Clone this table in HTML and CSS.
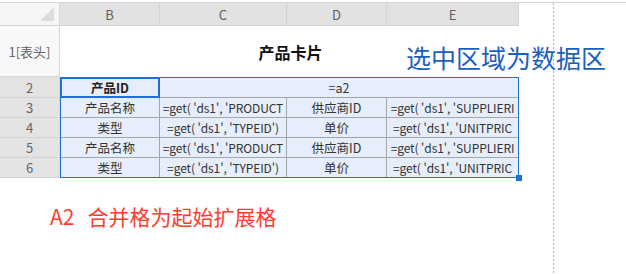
FILE: index.html
```html
<!DOCTYPE html>
<html lang="zh-CN">
<head>
<meta charset="utf-8">
<title>产品卡片</title>
<link rel="stylesheet" href="styles.css">
</head>
<body>
<div class="topline"></div>
<div class="page">
  <div class="canvas">
    <div class="sheet">
      <div class="corner"><span class="tri"></span></div>
      <div class="colh">B</div>
      <div class="colh">C</div>
      <div class="colh">D</div>
      <div class="colh">E</div>

      <div class="rowh r1">1[表头]</div>
      <div class="title">产品卡片</div>

      <div class="rowhs">
        <div class="rowh sel first">2</div>
        <div class="rowh sel">3</div>
        <div class="rowh sel">4</div>
        <div class="rowh sel">5</div>
        <div class="rowh sel last">6</div>
      </div>

      <div class="data">
        <div class="cell active bold">产品ID</div>
        <div class="cell merged">=a2</div>

        <div class="cell">产品名称</div>
        <div class="cell f">=get( 'ds1', 'PRODUCTNAME')</div>
        <div class="cell">供应商ID</div>
        <div class="cell f e">=get( 'ds1', 'SUPPLIERID')</div>

        <div class="cell">类型</div>
        <div class="cell f">=get( 'ds1', 'TYPEID')</div>
        <div class="cell">单价</div>
        <div class="cell f e">=get( 'ds1', 'UNITPRICE')</div>

        <div class="cell">产品名称</div>
        <div class="cell f">=get( 'ds1', 'PRODUCTNAME')</div>
        <div class="cell">供应商ID</div>
        <div class="cell f e">=get( 'ds1', 'SUPPLIERID')</div>

        <div class="cell nb">类型</div>
        <div class="cell f nb">=get( 'ds1', 'TYPEID')</div>
        <div class="cell nb">单价</div>
        <div class="cell f e nb">=get( 'ds1', 'UNITPRICE')</div>

        <span class="handle"></span>
      </div>
    </div>

    <div class="note-red"><span class="a2">A2</span>合并格为起始扩展格</div>
    <div class="note-blue">选中区域为数据区</div>
  </div>
  <div class="pagebreak"></div>
</div>
</body>
</html>
```

FILE: styles.css
```css
* { box-sizing: border-box; }

html, body {
  margin: 0;
  padding: 0;
  background: #ffffff;
}

body {
  width: 626px;
  height: 274px;
  overflow: hidden;
  font-family: "Noto Sans CJK SC", "Noto Sans", sans-serif;
  font-size: 13px;
  color: #333333;
}

.topline {
  height: 3px;
  border-bottom: 1px solid #d6d6d6;
}

.page {
  display: flex;
  height: 271px;
}

.canvas {
  position: relative;
  width: 553px;
}

.pagebreak {
  width: 1px;
  background: repeating-linear-gradient(to bottom, #b4b4b4 0 2px, transparent 2px 4px);
}

.sheet {
  display: grid;
  grid-template-columns: 60px 100px 127px 100px 132px;
  grid-template-rows: 23px 51px 101px;
  width: 519px;
}

.corner {
  position: relative;
  background: #f6f6f6;
  border-right: 1px solid #d6d6d6;
  border-bottom: 1px solid #d6d6d6;
}

.tri {
  position: absolute;
  right: 5px;
  bottom: 4px;
  width: 0;
  height: 0;
  border-left: 14px solid transparent;
  border-bottom: 14px solid #dcdcdc;
}

.colh {
  background: #e1e2e1;
  border-right: 1px solid #d2d3d2;
  border-bottom: 1px solid #d2d3d2;
  color: #606060;
  display: flex;
  align-items: center;
  justify-content: center;
  font-size: 13px;
}

.rowh {
  display: flex;
  align-items: center;
  justify-content: center;
  color: #666666;
  font-size: 13px;
  border-right: 1px solid #d6d6d6;
  border-bottom: 1px solid #d6d6d6;
}

.rowh.r1 {
  background: #f8f8f8;
}

.rowhs {
  display: flex;
  flex-direction: column;
}

.rowh.sel {
  background: #e2e3e2;
  height: 20px;
  border-bottom-color: #d2d3d2;
}

.rowh.sel.first { height: 21px; }

.title {
  grid-column: 2 / 6;
  display: flex;
  align-items: center;
  justify-content: center;
  font-size: 16px;
  font-weight: 700;
  color: #111111;
  padding-left: 2px;
}

.data {
  position: relative;
  grid-column: 2 / 6;
  display: grid;
  grid-template-columns: 99px 127px 100px 131px;
  grid-template-rows: 20px 20px 20px 20px 19px;
  background: #e6eefb;
  border: 1px solid #1f6fd8;
}

.cell {
  border-right: 1px solid #a3a6ab;
  border-bottom: 1px solid #a3a6ab;
  text-align: center;
  font-size: 12.5px;
  line-height: 17px;
  padding-top: 1px;
  overflow: hidden;
  white-space: normal;
  word-break: break-all;
  color: #333333;
}

.cell.e { border-right: none; }
.cell.nb { border-bottom: none; }

.cell.f {
  font-size: 12px;
  letter-spacing: -0.1px;
  padding-left: 1px;
  padding-right: 1px;
}

.cell.active {
  border: 2px solid #1f6fd8;
  border-left-width: 1px;
  border-top-width: 1px;
  line-height: 16px;
  padding-top: 1px;
}

.cell.bold {
  font-weight: 700;
  color: #222222;
}

.cell.merged {
  grid-column: 2 / 5;
  border-right: none;
}

.handle {
  position: absolute;
  right: -4px;
  bottom: -4px;
  width: 6px;
  height: 6px;
  background: #1f6fd8;
}

.note-red {
  margin-top: 23px;
  padding-left: 50px;
  font-size: 21px;
  line-height: 30px;
  color: #ff3b2e;
}

.note-red .a2 {
  margin-right: 13px;
}

.note-blue {
  position: absolute;
  left: 406px;
  top: 39px;
  font-size: 25px;
  line-height: 30px;
  color: #1b5fbd;
  white-space: nowrap;
}
```
